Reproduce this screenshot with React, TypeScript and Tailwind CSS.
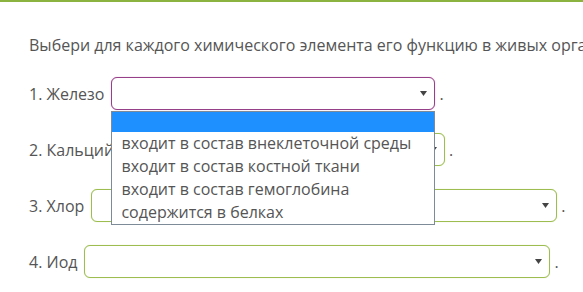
import React from 'react';

const Arrow = () => (
    <svg width="7" height="5" viewBox="0 0 7 5" className="shrink-0">
        <path d="M0 0 L7 0 L3.5 5 Z" fill="#444" />
    </svg>
);

interface SelectRowProps {
    label: string;
    width: string;
    borderClass: string;
    children?: React.ReactNode;
}

const SelectRow: React.FC<SelectRowProps> = ({ label, width, borderClass, children }) => (
    <div className="flex items-center h-[33px]">
        <span className="mr-[7px] whitespace-nowrap">{label}</span>
        <div className={`relative h-[33px] ${width}`}>
            <div
                className={`h-full w-full rounded-[6px] border bg-white flex items-center justify-end pr-[7px] ${borderClass}`}
            >
                <Arrow />
            </div>
            {children}
        </div>
        <span className="ml-[4px]">.</span>
    </div>
);

const options = [
    'входит в состав внеклеточной среды',
    'входит в состав костной ткани',
    'входит в состав гемоглобина',
    'содержится в белках',
];

export default function App() {
    return (
        <div
            className="w-[583px] h-[292px] overflow-hidden bg-white text-[16px] text-[#555]"
            style={{ fontFamily: '"Open Sans", "Liberation Sans", sans-serif' }}
        >
            <div className="h-[2px] bg-[#8ab43f]" />
            <div className="pl-[29px] pt-[33px]">
                <p className="whitespace-nowrap leading-[20px]">
                    Выбери для каждого химического элемента его функцию в живых организмах.
                </p>
                <div className="mt-[22px] flex flex-col gap-[23px]">
                    <div className="relative z-10">
                        <SelectRow
                            label="1. Железо"
                            width="w-[324px]"
                            borderClass="border-[#96408a] shadow-[0_0_1px_#c58abb]"
                        >
                            <div className="absolute left-0 top-[34px] w-[324px] border border-[#7d8b99] bg-white leading-[23px]">
                                <div className="h-[20px] bg-[#1e90ff]" />
                                {options.map((o) => (
                                    <div key={o} className="pl-[9px] whitespace-nowrap">
                                        {o}
                                    </div>
                                ))}
                            </div>
                        </SelectRow>
                    </div>
                    <SelectRow
                        label="2. Кальций"
                        width="w-[324px]"
                        borderClass="border-[#9dbd50] shadow-[0_0_1px_#c5d99a]"
                    />
                    <SelectRow
                        label="3. Хлор"
                        width="w-[466px]"
                        borderClass="border-[#9dbd50] shadow-[0_0_1px_#c5d99a]"
                    />
                    <SelectRow
                        label="4. Иод"
                        width="w-[466px]"
                        borderClass="border-[#9dbd50] shadow-[0_0_1px_#c5d99a]"
                    />
                </div>
            </div>
        </div>
    );
}
